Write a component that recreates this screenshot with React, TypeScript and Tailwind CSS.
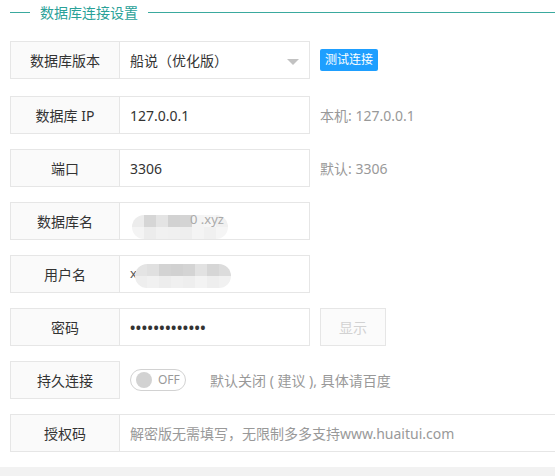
import React from "react";

const font = { fontFamily: '"Noto Sans", "Noto Sans CJK SC", sans-serif' };

function Label({ children }: { children: React.ReactNode }) {
  return (
    <div className="w-[110px] h-[38px] shrink-0 flex items-center justify-center border border-[#e6e6e6] bg-[#fafafa] text-[14px] text-[#333]">
      {children}
    </div>
  );
}

function Box({ children, className = "" }: { children?: React.ReactNode; className?: string }) {
  return (
    <div className={`h-[38px] shrink-0 flex items-center pl-[10px] border border-l-0 border-[#e6e6e6] bg-white text-[14px] text-[#333] relative ${className}`}>
      {children}
    </div>
  );
}

function Hint({ children }: { children: React.ReactNode }) {
  return <div className="ml-[10px] text-[14px] text-[#999]">{children}</div>;
}

function Mosaic({ cells }: { cells: string[][] }) {
  return (
    <div className="flex flex-col rounded-[12px] overflow-hidden">
      {cells.map((row, i) => (
        <div key={i} className="flex">
          {row.map((c, j) => (
            <div key={j} className="w-[12px] h-[12px]" style={{ background: c }} />
          ))}
        </div>
      ))}
    </div>
  );
}

export default function App() {
  return (
    <div className="w-[555px] h-[476px] overflow-hidden bg-white" style={font}>
      <div className="h-[25px] flex items-center pl-[10px]">
        <div className="w-[20px] h-px bg-[#3aa99e]" />
        <div className="ml-[10px] mr-[10px] text-[14px] text-[#2aa198] leading-none">数据库连接设置</div>
        <div className="flex-1 h-px bg-[#3aa99e]" />
      </div>
      <div className="pl-[10px] pt-[16px] flex flex-col gap-[15px]">
        <div className="flex items-center mb-[2px]">
          <Label>数据库版本</Label>
          <Box className="w-[190px]">
            船说（优化版）
            <div className="absolute right-[10px] top-[17px] w-0 h-0 border-l-[6px] border-r-[6px] border-t-[6px] border-l-transparent border-r-transparent border-t-[#c2c2c2]" />
          </Box>
          <div className="ml-[10px] h-[22px] px-[5px] flex items-center bg-[#1e9fff] text-white text-[12px] rounded-[2px]">测试连接</div>
        </div>
        <div className="flex items-center">
          <Label>数据库 IP</Label>
          <Box className="w-[190px]">127.0.0.1</Box>
          <Hint>本机: 127.0.0.1</Hint>
        </div>
        <div className="flex items-center">
          <Label>端口</Label>
          <Box className="w-[190px]">3306</Box>
          <Hint>默认: 3306</Hint>
        </div>
        <div className="flex items-center">
          <Label>数据库名</Label>
          <Box className="w-[190px]">
            <div className="absolute left-[12px] top-[12px]">
              <Mosaic
                cells={[
                  ["#ececec", "#d6d6d6", "#e4e4e4", "#d2d2d2", "#d4d4d4", "#f4f4f4", "#f6f6f6", "#f0f0f0"],
                  ["#f4f4f4", "#ececec", "#f1f1f1", "#f0f0f0", "#eeeeee", "#f4f4f4", "#f0f0f0", "#f5f5f5"],
                ]}
              />
            </div>
            <span className="absolute left-[70px] top-[7px] text-[#aaa] text-[13px] z-10">0 .xyz</span>
          </Box>
        </div>
        <div className="flex items-center">
          <Label>用户名</Label>
          <Box className="w-[190px]">
            <span className="text-[#555] text-[13px]">x</span>
            <div className="absolute left-[15px] top-[8px]">
              <Mosaic
                cells={[
                  ["#e4e4e4", "#e0e0e0", "#d3d3d3", "#d1d1d1", "#d4d4d4", "#e2e2e2", "#d6d6d6", "#dcdcdc"],
                  ["#eeeeee", "#f1f1f1", "#ededed", "#f0f0f0", "#eeeeee", "#f3f3f3", "#eeeeee", "#f1f1f1"],
                ]}
              />
            </div>
          </Box>
        </div>
        <div className="flex items-center">
          <Label>密码</Label>
          <Box className="w-[190px]">
            <span className="text-[14px] tracking-[0.6px] text-[#333] font-bold">•••••••••••••</span>
          </Box>
          <div className="ml-[10px] w-[66px] h-[38px] flex items-center justify-center border border-[#e6e6e6] bg-[#fbfbfb] text-[14px] text-[#d2d2d2]">显示</div>
        </div>
        <div className="flex items-center">
          <Label>持久连接</Label>
          <div className="ml-[10px] w-[56px] h-[22px] rounded-[20px] border border-[#d2d2d2] flex items-center pl-[5px]">
            <div className="w-[16px] h-[16px] rounded-full bg-[#d2d2d2]" />
            <span className="ml-[6px] text-[12px] text-[#999]">OFF</span>
          </div>
          <div className="ml-[24px] text-[14px] text-[#999]">默认关闭 ( 建议 ), 具体请百度</div>
        </div>
        <div className="flex items-center">
          <Label>授权码</Label>
          <Box className="w-[460px] text-[#999]">解密版无需填写，无限制多多支持www.huaitui.com</Box>
        </div>
      </div>
      <div className="mt-[15px] h-[20px] bg-[#f2f2f2]" />
    </div>
  );
}
